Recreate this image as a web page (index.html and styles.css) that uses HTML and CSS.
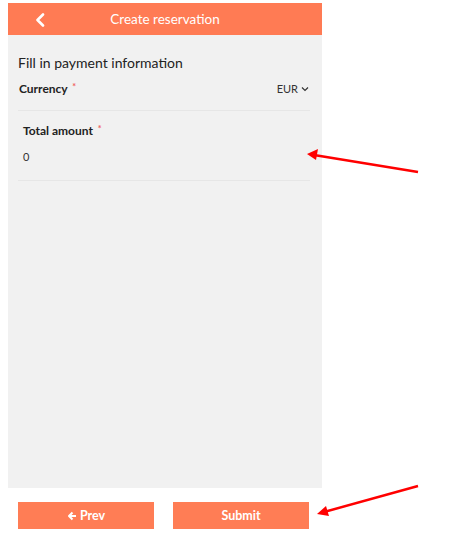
FILE: index.html
```html
<!DOCTYPE html>
<html lang="en">
<head>
    <meta charset="UTF-8">
    <meta name="viewport" content="width=device-width, initial-scale=1.0">
    <title>Create reservation</title>
    <link rel="stylesheet" href="styles.css">
</head>
<body>
    <div class="phone">
        <div class="header">
            <svg class="back" width="10" height="14" viewBox="0 0 10 14">
                <path d="M8 1.5 L2.5 7 L8 12.5" fill="none" stroke="white" stroke-width="2.6" stroke-linecap="round" stroke-linejoin="round"/>
            </svg>
            <span class="title">Create reservation</span>
        </div>
        <div class="content">
            <h2>Fill in payment information</h2>
            <div class="row currency">
                <span class="label">Currency <span class="req">*</span></span>
                <span class="select">EUR
                    <svg width="8" height="6" viewBox="0 0 8 6"><path d="M1 1.5 L4 4.5 L7 1.5" fill="none" stroke="#333" stroke-width="1.2"/></svg>
                </span>
            </div>
            <div class="field">
                <span class="label">Total amount <span class="req">*</span></span>
                <div class="value">0</div>
            </div>
        </div>
        <div class="buttons">
            <button class="btn">
                <svg width="10" height="10" viewBox="0 0 10 10"><path d="M9 5 H2.5 M5.5 1.5 L2 5 L5.5 8.5" fill="none" stroke="white" stroke-width="2" stroke-linejoin="round"/></svg>
                Prev
            </button>
            <button class="btn">Submit</button>
        </div>
    </div>

    <!-- annotation arrows -->
    <svg class="arrows" width="463" height="541" viewBox="0 0 463 541">
        <line x1="418" y1="172" x2="314" y2="155" stroke="#f00" stroke-width="2.5"/>
        <polygon points="307,154 318,149 316,160" fill="#f00"/>
        <line x1="418" y1="486" x2="324" y2="512" stroke="#f00" stroke-width="2.5"/>
        <polygon points="317,514 326,506 329,516" fill="#f00"/>
    </svg>
</body>
</html>
```

FILE: styles.css
```css
body {
    margin: 0;
    background-color: white;
    font-family: Lato, "Noto Sans", sans-serif;
    color: #333;
}
.phone {
    width: 314px;
    margin: 3px 0 0 8px;
}
.header {
    height: 32px;
    background-color: #ff7b54;
    display: flex;
    align-items: center;
    justify-content: center;
    position: relative;
}
.back {
    position: absolute;
    left: 27px;
    top: 10px;
}
.title {
    color: white;
    font-size: 13.5px;
}
.content {
    height: 453px;
    background-color: #f1f1f1;
    padding: 0 12px 0 10px;
    box-sizing: border-box;
}
h2 {
    font-size: 14px;
    font-weight: normal;
    margin: 0;
    padding-top: 19px;
    color: #222;
}
.row {
    display: flex;
    justify-content: space-between;
    align-items: center;
    margin-top: 10px;
    padding: 0 1px 14px 1px;
    border-bottom: 1px solid #e6e6e6;
}
.label {
    font-size: 12px;
    font-weight: bold;
    color: #222;
}
.req {
    color: #f06060;
    font-size: 9px;
    vertical-align: top;
    margin-left: 2px;
}
.select {
    font-size: 11px;
    display: flex;
    align-items: center;
    gap: 3px;
}
.field {
    padding: 12px 5px 17px 5px;
    border-bottom: 1px solid #e6e6e6;
}
.field .label {
    display: block;
}
.value {
    font-size: 11px;
    margin-top: 12px;
}
.buttons {
    display: flex;
    justify-content: space-between;
    padding: 14px 13px 0 10px;
}
.btn {
    width: 136px;
    height: 27px;
    border: none;
    background-color: #ff7d55;
    color: white;
    font-family: Lato, "Noto Sans", sans-serif;
    font-weight: bold;
    font-size: 12.5px;
    display: flex;
    align-items: center;
    justify-content: center;
    gap: 3px;
}
.arrows {
    position: absolute;
    left: 0;
    top: 0;
    pointer-events: none;
}
```
